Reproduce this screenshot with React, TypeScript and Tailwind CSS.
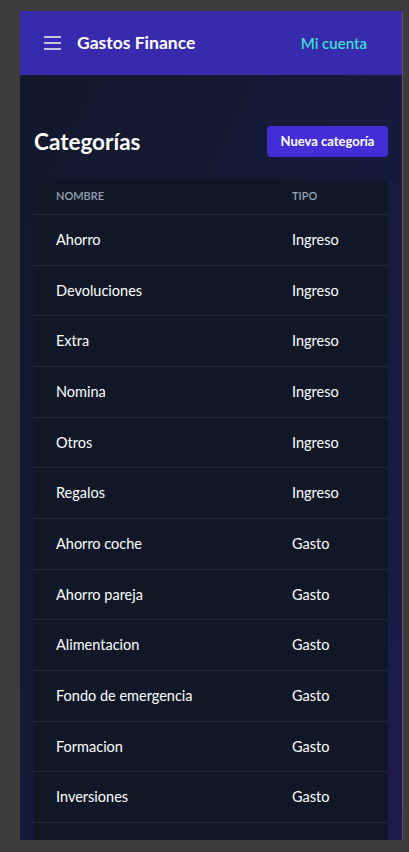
const categorias = [
  { nombre: "Ahorro", tipo: "Ingreso" },
  { nombre: "Devoluciones", tipo: "Ingreso" },
  { nombre: "Extra", tipo: "Ingreso" },
  { nombre: "Nomina", tipo: "Ingreso" },
  { nombre: "Otros", tipo: "Ingreso" },
  { nombre: "Regalos", tipo: "Ingreso" },
  { nombre: "Ahorro coche", tipo: "Gasto" },
  { nombre: "Ahorro pareja", tipo: "Gasto" },
  { nombre: "Alimentacion", tipo: "Gasto" },
  { nombre: "Fondo de emergencia", tipo: "Gasto" },
  { nombre: "Formacion", tipo: "Gasto" },
  { nombre: "Inversiones", tipo: "Gasto" },
];

export default function App() {
  return (
    <div
      className="h-[852px] bg-[#3c3b3d] pt-[11px] pl-[20px]"
      style={{ fontFamily: "Lato, 'Noto Sans', sans-serif" }}
    >
      {/* device frame */}
      <div className="w-[383px] h-[829px] overflow-hidden border-r border-[#5a5a5e] bg-gradient-to-br from-gray-900 to-indigo-950">
        <header className="h-16 bg-indigo-800 flex items-center pl-6 pr-[35px]">
          <svg width="17" height="14" viewBox="0 0 17 14" className="text-gray-100">
            <path d="M0 1h17M0 7h17M0 13h17" stroke="currentColor" strokeWidth="1.6" />
          </svg>
          <span className="ml-4 text-white font-bold text-[17.5px]">Gastos Finance</span>
          <span className="ml-auto text-[#40dfd0] font-semibold text-[15px]">Mi cuenta</span>
        </header>

        <main className="px-[14px] pt-[50px]">
          <div className="flex items-center justify-between">
            <h1 className="text-white font-bold text-[22.5px] leading-[33px]">Categorías</h1>
            <button className="bg-indigo-700 text-white text-[13px] font-bold rounded h-[31px] w-[121px]">
              Nueva categoría
            </button>
          </div>

          <div className="mt-[21px] bg-gray-900 rounded-t-lg">
            <div className="flex h-[36px] items-center border-b border-gray-800 text-[11px] font-semibold text-gray-400 uppercase">
              <div className="pl-[22px] w-[258px]">Nombre</div>
              <div>Tipo</div>
            </div>
            {categorias.map((c) => (
              <div
                key={c.nombre}
                className="flex h-[50.67px] items-center border-b border-gray-800 text-[14.5px] text-white"
              >
                <div className="pl-[22px] w-[258px]">{c.nombre}</div>
                <div>{c.tipo}</div>
              </div>
            ))}
            <div className="h-[24px]" />
          </div>
        </main>
      </div>
    </div>
  );
}
